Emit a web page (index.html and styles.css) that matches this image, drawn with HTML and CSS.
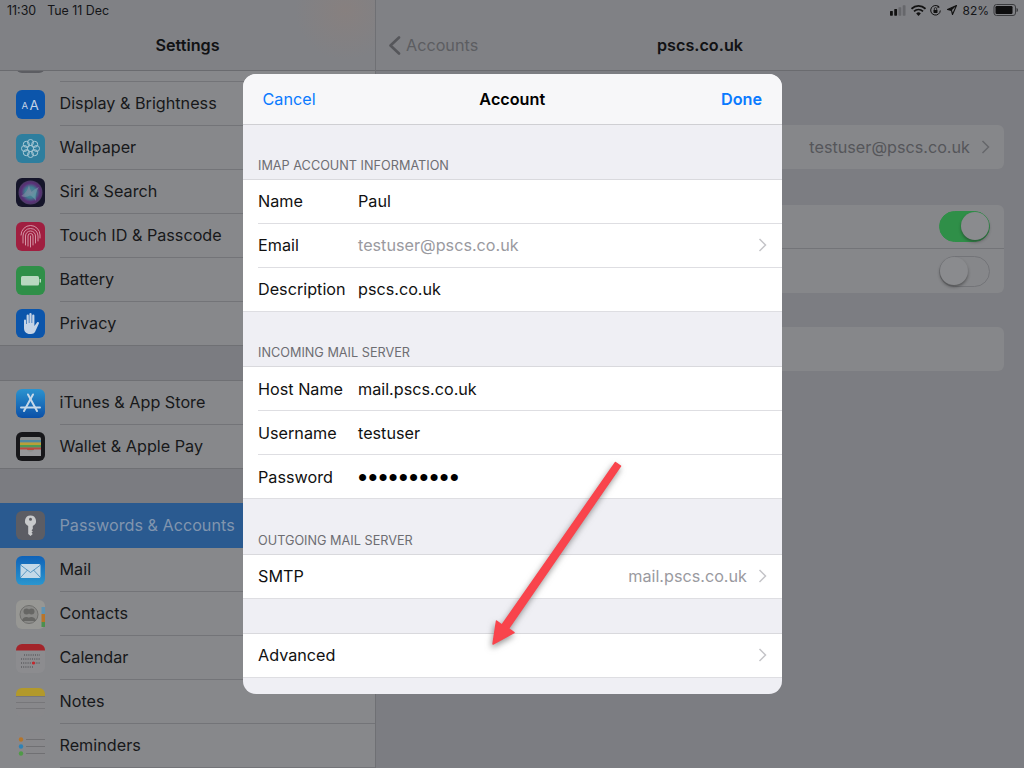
FILE: index.html
```html
<!DOCTYPE html>
<html lang="en">
<head>
<meta charset="utf-8">
<title>Account</title>
<link rel="stylesheet" href="styles.css">
</head>
<body>
<div class="screen">
  <aside class="sidebar">
    <header class="nav nav-tinted"><span class="nav-title">Settings</span></header>
    <div class="peek"><span class="icon peek-icon"></span><span class="peek-line"></span></div>
    <div class="row"><svg class="icon" viewBox="0 0 29 29"><rect width="29" height="29" rx="6" fill="#0b55ab"/><text x="5.5" y="19" class="aa-s">A</text><text x="13.5" y="20" class="aa-l">A</text></svg><div class="row-body">Display &amp; Brightness</div></div>
    <div class="row"><svg class="icon" viewBox="0 0 29 29"><rect width="29" height="29" rx="6" fill="#2e7e9e"/><g fill="none" stroke="#a9c9d6" stroke-width="1"><circle cx="14.5" cy="14.5" r="3"/><circle cx="14.5" cy="8.5" r="3"/><circle cx="14.5" cy="20.5" r="3"/><circle cx="8.5" cy="14.5" r="3"/><circle cx="20.5" cy="14.5" r="3"/><circle cx="10.3" cy="10.3" r="3"/><circle cx="18.7" cy="10.3" r="3"/><circle cx="10.3" cy="18.7" r="3"/><circle cx="18.7" cy="18.7" r="3"/></g></svg><div class="row-body">Wallpaper</div></div>
    <div class="row"><svg class="icon" viewBox="0 0 29 29"><defs><radialGradient id="siri" cx="50%" cy="50%" r="50%"><stop offset="0" stop-color="#5f7f98"/><stop offset=".45" stop-color="#3f7f90"/><stop offset=".78" stop-color="#5b3078"/><stop offset="1" stop-color="#4a3a66"/></radialGradient><linearGradient id="siri-glow" x1="0" y1="0" x2="1" y2="1"><stop offset="0" stop-color="#a86a9a"/><stop offset="1" stop-color="#5fc0b8"/></linearGradient></defs><rect width="29" height="29" rx="6" fill="#15152a"/><circle cx="14.5" cy="14.5" r="12" fill="url(#siri)"/><path d="M5 18 Q11 15 13 7 Q14 12 15.500 14 Q18 11 23 9 Q18.500 15 20 23 Q16.500 18 14 17.500 Q10 20 5 18Z" fill="url(#siri-glow)" opacity=".55"/></svg><div class="row-body">Siri &amp; Search</div></div>
    <div class="row"><svg class="icon" viewBox="0 0 29 29"><rect width="29" height="29" rx="6" fill="#a01f40"/><g fill="none" stroke="#d9a3b1" stroke-width=".9" stroke-linecap="round"><path d="M5 13a9.500 9.500 0 0 1 19 0v3"/><path d="M7 21v-7a7.500 7.500 0 0 1 15 0v5"/><path d="M9.500 23v-9a5 5 0 0 1 10 0v7"/><path d="M12 24v-10a2.500 2.500 0 0 1 5 0v9"/><path d="M14.500 25V14"/></g></svg><div class="row-body">Touch ID &amp; Passcode</div></div>
    <div class="row"><svg class="icon" viewBox="0 0 29 29"><rect width="29" height="29" rx="6" fill="#2f8f48"/><rect x="5" y="10" width="18" height="9.500" rx="1.500" fill="#b9d8c0"/><rect x="23.500" y="13" width="1.500" height="3.500" fill="#b9d8c0"/></svg><div class="row-body">Battery</div></div>
    <div class="row row-end"><svg class="icon" viewBox="0 0 29 29"><rect width="29" height="29" rx="6" fill="#0b55ab"/><path d="M8 11.500a1 1 0 0 1 2 0V15h.6V6.500a1.100 1.100 0 0 1 2.200 0V14h.6V5a1.100 1.100 0 0 1 2.200 0v9h.6V6.500a1.100 1.100 0 0 1 2.200 0V17l2.600-3.500c1-1.200 2.700 0 1.800 1.300L19 23c-.8 1.300-2 2-4 2h-1c-4 0-6-2.500-6-6Z" fill="#c6d4e6"/></svg><div class="row-body">Privacy</div></div>
    <div class="gap"></div>
    <div class="group-top"></div>
    <div class="row"><svg class="icon" viewBox="0 0 29 29"><defs><linearGradient id="store" x1="0" y1="0" x2="0" y2="1"><stop offset="0" stop-color="#2b93cf"/><stop offset="1" stop-color="#0b50a8"/></linearGradient></defs><rect width="29" height="29" rx="6" fill="url(#store)"/><g stroke="#c6d8e8" stroke-width="2" stroke-linecap="round" fill="none"><path d="M12 5.500l9 16.500"/><path d="M17 5.500 8 22"/><path d="M5 18.500h19"/></g></svg><div class="row-body">iTunes &amp; App Store</div></div>
    <div class="row row-end"><svg class="icon" viewBox="0 0 29 29"><rect width="29" height="29" rx="6" fill="#17171a"/><rect x="4" y="5" width="21" height="19" rx="1.500" fill="#8d8e8d"/><rect x="4" y="8" width="21" height="2.500" fill="#4f87a0"/><rect x="4" y="10.500" width="21" height="2.500" fill="#b8a038"/><rect x="4" y="13" width="21" height="2.500" fill="#4f9a57"/><rect x="4" y="15.500" width="21" height="2.500" fill="#b84a40"/><path d="M4 17.500h7c1 3 6 3 7 0h7V24H4Z" fill="#96979a"/></svg><div class="row-body">Wallet &amp; Apple Pay</div></div>
    <div class="gap"></div>
    <div class="row row-selected"><svg class="icon" viewBox="0 0 29 29"><rect width="29" height="29" rx="6" fill="#5c5d64"/><path d="M14.500 4.500a5.500 5.500 0 0 1 2.300 10.500v3l-1.300 1.200 1.300 1.300-1.300 1.300 1.300 1.200-2.300 2-2.300-2V15a5.500 5.500 0 0 1 2.300-10.500Zm0 2.300a1.500 1.500 0 1 0 0 3 1.500 1.500 0 0 0 0-3Z" fill="#c9cacc" fill-rule="evenodd"/></svg><div class="row-body">Passwords &amp; Accounts</div></div>
    <div class="row"><svg class="icon" viewBox="0 0 29 29"><defs><linearGradient id="mail" x1="0" y1="0" x2="0" y2="1"><stop offset="0" stop-color="#0f62b8"/><stop offset="1" stop-color="#2a96cf"/></linearGradient></defs><rect width="29" height="29" rx="6" fill="url(#mail)"/><rect x="4.500" y="8" width="20" height="14" rx="1.500" fill="#c3d9e8"/><path d="M4.500 9l10 7.500L24.500 9M4.500 21.500l7-7.500M24.500 21.500l-7-7.500" fill="none" stroke="#3d86b8" stroke-width=".8"/></svg><div class="row-body">Mail</div></div>
    <div class="row"><svg class="icon" viewBox="0 0 29 29"><rect width="29" height="29" rx="6" fill="#979794"/><rect x="25.500" y="7" width="3.500" height="7" fill="#5f93b3"/><rect x="25.500" y="14" width="3.500" height="8" fill="#b8752a"/><rect x="25.500" y="22" width="3.500" height="5" fill="#4d8f4f"/><circle cx="13" cy="14.500" r="9" fill="#8a8a88" stroke="#6f6f6d"/><circle cx="10.500" cy="11.500" r="3" fill="#666664"/><circle cx="15.500" cy="11.500" r="3" fill="#666664"/><path d="M6 21c.3-5 8-5.500 9 0ZM11 21c.3-5 8-5.500 9 0Z" fill="#666664"/></svg><div class="row-body">Contacts</div></div>
    <div class="row"><svg class="icon" viewBox="0 0 29 29"><rect width="29" height="29" rx="6" fill="#8c8c8f"/><path d="M0 6.500V6a6 6 0 0 1 6-6h17a6 6 0 0 1 6 6v.5Z" fill="#a3242a"/><path d="M8 11h16M5 15h19M5 19h19M5 23h13" stroke="#46464a" stroke-width="1" stroke-dasharray="1 1.200"/><circle cx="17.500" cy="19" r="1.600" fill="#c5262c"/></svg><div class="row-body">Calendar</div></div>
    <div class="row"><svg class="icon" viewBox="0 0 29 29"><rect width="29" height="29" rx="6" fill="#88888b"/><path d="M0 8V6a6 6 0 0 1 6-6h17a6 6 0 0 1 6 6v2Z" fill="#b2992b"/><path d="M0 8.500h29M0 14.500h29M0 20.500h29" stroke="#77777a"/></svg><div class="row-body">Notes</div></div>
    <div class="row"><svg class="icon" viewBox="0 0 29 29"><rect width="29" height="29" rx="6" fill="#88888b"/><circle cx="5" cy="7.500" r="2.200" fill="#b5752a"/><circle cx="5" cy="14.500" r="2.200" fill="#2f82b5"/><circle cx="5" cy="21.500" r="2.200" fill="#4f9a47"/><path d="M10 7.500h19M10 14.500h19M10 21.500h19" stroke="#707073"/></svg><div class="row-body">Reminders</div></div>
  </aside>

  <main class="detail">
    <header class="nav">
      <span class="back"><svg class="back-chevron" viewBox="0 0 13 19"><path d="M11 1.500 2.500 9.500 11 17.500" fill="none" stroke="#55565a" stroke-width="2.600" stroke-linecap="round" stroke-linejoin="round"/></svg>Accounts</span>
      <span class="nav-title">pscs.co.uk</span>
    </header>
    <div class="detail-body">
      <section class="card card-email"><span class="card-value">testuser@pscs.co.uk</span><svg class="chev chev-dim" viewBox="0 0 9 14"><path d="M1.500 1 7.500 7l-6 6" fill="none" stroke="currentColor" stroke-width="1.500"/></svg></section>
      <section class="card card-toggles">
        <div class="toggle-row toggle-line"><span class="toggle toggle-on"><span class="knob"></span></span></div>
        <div class="toggle-row"><span class="toggle"><span class="knob"></span></span></div>
      </section>
      <section class="card card-empty"></section>
    </div>
  </main>

  <div class="status">
    <span class="status-left"><span>11:30</span><span>Tue 11 Dec</span></span>
    <span class="status-right">
      <svg class="st-signal" viewBox="0 0 17 11"><rect x="0" y="6" width="3" height="5" rx=".6" fill="#111"/><rect x="4.500" y="4" width="3" height="7" rx=".6" fill="#111"/><rect x="9" y="2" width="3" height="9" rx=".6" fill="#66676b"/><rect x="13.500" y="0" width="3" height="11" rx=".6" fill="#66676b"/></svg>
      <svg class="st-wifi" viewBox="0 0 15 11"><path d="M.5 3.800a10 10 0 0 1 14 0" fill="none" stroke="#111" stroke-width="1.700"/><path d="M3 6.300a6.500 6.500 0 0 1 9 0" fill="none" stroke="#111" stroke-width="1.700"/><path d="M5.200 8.400a3.200 3.200 0 0 1 4.600 0L7.500 11Z" fill="#111"/></svg>
      <svg class="st-lock" viewBox="0 0 11 11"><path d="M8.800 1.800A4.800 4.800 0 1 0 10.300 5.500" fill="none" stroke="#111" stroke-width="1"/><path d="M7.800.3l2 2-2.300.6Z" fill="#111"/><rect x="3.500" y="5" width="4" height="3" rx=".4" fill="#111"/><path d="M4.300 5V3.800a1.200 1.200 0 0 1 2.400 0V5" fill="none" stroke="#111" stroke-width=".8"/></svg>
      <svg class="st-loc" viewBox="0 0 10 10"><path d="M9.500.5 5.500 9.500 4.500 5.500.5 4.500Z" fill="none" stroke="#111" stroke-width="1.100" stroke-linejoin="round"/><path d="M9.500.5 4.500 5.500 .5 4.500Z" fill="#111"/></svg>
      <span class="st-pct">82%</span>
      <svg class="st-batt" viewBox="0 0 25 12"><rect x=".5" y=".5" width="21.500" height="11" rx="2.500" fill="none" stroke="#3a3b3e"/><rect x="2" y="2" width="17" height="8" rx="1.200" fill="#0d0d0e"/><path d="M23 4v4c1 0 1.500-1 1.500-2s-.5-2-1.500-2Z" fill="#3a3b3e"/></svg>
    </span>
  </div>

  <div class="modal">
    <header class="modal-bar">
      <span class="link">Cancel</span>
      <span class="modal-title">Account</span>
      <span class="link link-strong">Done</span>
    </header>
    <h2 class="section">IMAP ACCOUNT INFORMATION</h2>
    <div class="table">
      <div class="cell"><span class="cell-label">Name</span><span>Paul</span></div>
      <div class="cell"><span class="cell-label">Email</span><span class="muted">testuser@pscs.co.uk</span><svg class="chev" viewBox="0 0 9 14"><path d="M1.500 1 7.500 7l-6 6" fill="none" stroke="currentColor" stroke-width="1.500"/></svg></div>
      <div class="cell cell-end"><span class="cell-label">Description</span><span>pscs.co.uk</span></div>
    </div>
    <h2 class="section">INCOMING MAIL SERVER</h2>
    <div class="table table-low">
      <div class="cell"><span class="cell-label">Host Name</span><span>mail.pscs.co.uk</span></div>
      <div class="cell"><span class="cell-label">Username</span><span>testuser</span></div>
      <div class="cell cell-end"><span class="cell-label">Password</span><span class="dots">••••••••••</span></div>
    </div>
    <h2 class="section section-tall">OUTGOING MAIL SERVER</h2>
    <div class="table">
      <div class="cell cell-end"><span class="cell-label">SMTP</span><span class="muted cell-right">mail.pscs.co.uk</span><svg class="chev" viewBox="0 0 9 14"><path d="M1.500 1 7.500 7l-6 6" fill="none" stroke="currentColor" stroke-width="1.500"/></svg></div>
    </div>
    <div class="spacer"></div>
    <div class="table">
      <div class="cell cell-end"><span class="cell-label">Advanced</span><svg class="chev chev-push" viewBox="0 0 9 14"><path d="M1.500 1 7.500 7l-6 6" fill="none" stroke="currentColor" stroke-width="1.500"/></svg></div>
    </div>
  </div>

  <svg class="arrow" viewBox="0 0 1024 768"><path d="M615.500 462.500 620.500 466 508.500 628.500 514 632.500 493 644 496.500 621 502 625Z" fill="#f9444c" stroke="#f9444c" stroke-width="1.500" stroke-linejoin="round"/></svg>
</div>
</body>
</html>
```
FILE: styles.css
```css
* { box-sizing: border-box; }
html, body { margin: 0; padding: 0; }
body { width: 1024px; height: 768px; overflow: hidden; font-family: Inter, "Liberation Sans", sans-serif; font-size: 16.2px; color: #17181a; }

.screen { position: relative; width: 1024px; height: 768px; display: flex; overflow: hidden; background: #7c7d82; }

.sidebar { width: 376px; flex: none; border-right: 1px solid #6f7074; background: #7b7c81; height: 768px; overflow: hidden; }
.detail { flex: 1; min-width: 0; }

.nav { position: relative; height: 71px; background: #808185; border-bottom: 1px solid #6a6b6f; display: flex; align-items: flex-end; justify-content: center; padding-bottom: 14px; }
.nav-tinted { background: radial-gradient(ellipse 50px 50px at 345px 10px, #87807f, #808185); }
.nav-title { font-weight: 600; line-height: 22px; color: #111214; }

.peek { height: 11px; background: #87888b; position: relative; overflow: hidden; border: 0; }
.peek-icon { position: absolute; left: 15.5px; top: -27px; display: block; background: #5c5d62; border-radius: 6px; }
.peek-line { position: absolute; left: 60px; right: 0; bottom: 0; height: 1px; background: #737478; }

.icon { width: 29px; height: 29px; flex: none; display: block; }

.row { height: 44px; display: flex; align-items: center; padding-left: 15.5px; background: #87888b; }
.row-body { flex: 1; align-self: stretch; margin-left: 15px; padding-bottom: 2px; display: flex; align-items: center; border-bottom: 1px solid #737478; white-space: nowrap; }
.row-end { border-bottom: 1px solid #6f7074; }
.row-end .row-body { border-bottom: 0; }
.row-selected { height: 45px; background: #2a5a90; }
.row-selected .row-body { border-bottom: 0; color: #8195ae; }
.gap { height: 34px; }
.group-top { height: 0; border-top: 1px solid #6f7074; }

.aa-s { font: 400 9.500px Inter, sans-serif; fill: #c5d3e6; }
.aa-l { font: 400 13.500px Inter, sans-serif; fill: #c5d3e6; }

.back { position: absolute; left: 12px; bottom: 14px; display: flex; align-items: center; gap: 5px; color: #5c5d61; line-height: 22px; }
.back-chevron { width: 13px; height: 19px; }

.detail-body { padding: 54px 20px 0; display: flex; flex-direction: column; }
.card { background: #86878a; border-radius: 6px; }
.card-email { height: 44px; display: flex; align-items: center; justify-content: flex-end; padding-right: 14px; gap: 11px; color: #55565a; padding-bottom: 1px; }
.card-toggles { margin-top: 36px; }
.card-empty { height: 44px; margin-top: 34px; }
.toggle-row { height: 44px; display: flex; align-items: center; justify-content: flex-end; padding-right: 14px; }
.toggle-line { border-bottom: 1px solid #737478; }
.toggle { width: 51px; height: 31px; border-radius: 16px; border: 1.500px solid #737478; background: #86878a; position: relative; display: block; }
.toggle-on { background: #2f8f48; border-color: #2f8f48; }
.knob { position: absolute; left: 0; top: 0; width: 28px; height: 28px; border-radius: 50%; background: #8a8b8e; box-shadow: 0 2px 3px rgba(30,30,30,.45); }
.toggle-on .knob { left: 20.500px; }

.chev { width: 9px; height: 14px; flex: none; color: #c4c4c8; }
.chev-dim { color: #66676b; }
.chev-push { margin-left: auto; }

.status { position: absolute; left: 0; right: 0; top: 0; height: 20px; padding: 0 5px 0 7px; display: flex; justify-content: space-between; align-items: center; font-size: 12.400px; color: #141518; }
.status-left { display: flex; gap: 11px; }
.status-right { display: flex; align-items: center; }
.st-signal { width: 16px; height: 11px; margin-right: 5px; }
.st-wifi { width: 15px; height: 11px; margin-right: 4px; }
.st-lock { width: 11px; height: 11px; margin-right: 6px; }
.st-loc { width: 10px; height: 10px; margin-right: 5px; }
.st-pct { margin-right: 4px; font-size: 12px; }
.st-batt { width: 26px; height: 12px; }

.modal { position: absolute; left: 242.500px; top: 74px; width: 539.500px; height: 620px; border-radius: 13px; overflow: hidden; background: #efeff4; }
.modal-bar { height: 51px; background: #f7f7f9; border-bottom: 1px solid #cfcfd3; display: grid; grid-template-columns: 1fr auto 1fr; align-items: center; padding: 0 20px; color: #000; }
.link { color: #0a7aff; }
.link-strong { font-weight: 600; text-align: right; }
.modal-title { font-weight: 600; }
.section { margin: 0; height: 54px; padding: 0 15.500px 5px; display: flex; align-items: flex-end; font-size: 12.700px; font-weight: 400; color: #6d6d72; line-height: 16px; }
.section-tall { height: 55px; }
.table { background: #fff; border-top: 1px solid #d9d9dd; color: #111; }
.cell { height: 44px; margin-left: 15.500px; padding-right: 15px; padding-bottom: 2px; display: flex; align-items: center; border-bottom: 1px solid #dedee2; }
.table-low .cell { padding-bottom: 0; }
.cell-label { width: 100px; flex: none; }
.cell-end { margin-left: 0; padding-left: 15.500px; }
.muted { color: #9a9a9f; }
.cell-right { margin-left: auto; }
.cell .chev { margin-left: auto; }
.cell .cell-right + .chev { margin-left: 11px; }
.dots { font-family: "Liberation Sans", sans-serif; font-size: 26px; letter-spacing: 1.100px; line-height: 20px; color: #000; }
.spacer { height: 34px; }

.arrow { position: absolute; left: 0; top: 0; width: 1024px; height: 768px; filter: drop-shadow(-1px 3px 3px rgba(60,60,60,.55)); pointer-events: none; }
```
